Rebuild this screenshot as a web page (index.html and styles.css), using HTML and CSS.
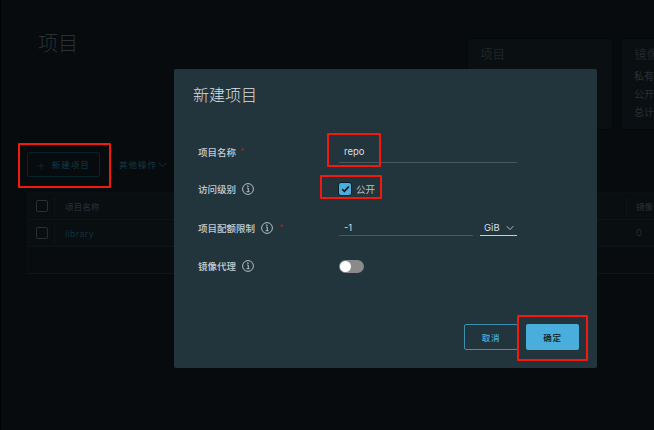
FILE: index.html
```html
<!DOCTYPE html>
<html lang="zh">
<head>
<meta charset="utf-8">
<title>项目</title>
<link rel="stylesheet" href="styles.css">
</head>
<body>
<svg class="defs" width="0" height="0" aria-hidden="true">
  <symbol id="info" viewBox="0 0 12 12">
    <circle cx="6" cy="6" r="5.4" fill="none" stroke="currentColor" stroke-width="0.9"/>
    <path d="M5 3h1.2v.9M5 5.1h1.3v3.5M4.6 8.7h2.9" fill="none" stroke="currentColor" stroke-width="0.9"/>
  </symbol>
  <symbol id="chev" viewBox="0 0 9 6">
    <path d="M.8 1l3.7 3.7L8.2 1" fill="none" stroke="currentColor" stroke-width="1"/>
  </symbol>
</svg>

<div class="page">
  <div class="top">
    <h1 class="page-title">项目</h1>
    <div class="cards">
      <section class="card card-a"><h2 class="card-title">项目</h2></section>
      <section class="card card-b">
        <h2 class="card-title">镜像仓库</h2>
        <p class="card-line">私有</p>
        <p class="card-line">公开</p>
        <p class="card-line">总计</p>
      </section>
    </div>
  </div>

  <div class="actions">
    <button class="new-btn"><span class="plus">+</span>新建项目</button>
    <button class="more-btn">其他操作<svg class="more-chev"><use href="#chev"/></svg></button>
  </div>

  <div class="table">
    <div class="tr th">
      <span class="cb"></span><span class="cell-name">项目名称</span><span class="cell-num">镜像仓库数</span>
    </div>
    <div class="tr">
      <span class="cb"></span><span class="cell-name link">library</span><span class="cell-num zero">0</span>
    </div>
    <div class="tr tfoot"></div>
  </div>
</div>

<div class="modal">
  <h3 class="modal-title">新建项目</h3>
  <form class="form">
    <div class="row">
      <div class="label">项目名称<span class="req">*</span></div>
      <div class="control underline"><span class="value">repo</span></div>
    </div>
    <div class="row">
      <div class="label">访问级别<svg class="info"><use href="#info"/></svg></div>
      <div class="control check-wrap">
        <span class="check"><svg width="9" height="8" viewBox="0 0 9 8"><path d="M1.2 4.2l2.2 2.2L7.8 1.6" fill="none" stroke="#08141c" stroke-width="1.6"/></svg></span>
        <span class="check-label">公开</span>
      </div>
    </div>
    <div class="row row-quota">
      <div class="label">项目配额限制<svg class="info"><use href="#info"/></svg><span class="req req-far">*</span></div>
      <div class="control quota">
        <div class="underline quota-input"><span class="value">-1</span></div>
        <div class="underline unit">GiB<svg class="unit-chev"><use href="#chev"/></svg></div>
      </div>
    </div>
    <div class="row row-proxy">
      <div class="label">镜像代理<svg class="info"><use href="#info"/></svg></div>
      <div class="control"><span class="toggle"><span class="knob"></span></span></div>
    </div>
  </form>
  <div class="footer">
    <button class="btn btn-outline" type="button">取消</button>
    <button class="btn btn-primary" type="button">确定</button>
  </div>
</div>

<div class="mark mark-new"></div>
<div class="mark mark-name"></div>
<div class="mark mark-check"></div>
<div class="mark mark-ok"></div>
</body>
</html>
```
FILE: styles.css
```css
* { box-sizing: border-box; }
html, body { margin: 0; padding: 0; }
body {
  width: 654px;
  height: 430px;
  overflow: hidden;
  position: relative;
  background: #070b0e;
  border-left: 1px solid #000;
  font-family: "Inter", "Noto Sans CJK SC", sans-serif;
  color: #c8d0d4;
}
.defs { position: absolute; }
.page { padding: 0 0 0 26px; width: 653px; }
.top { display: flex; height: 143px; }
.page-title {
  margin: 30px 0 0 11px;
  font: 300 20px/26px "Noto Sans CJK SC", sans-serif;
  color: #2b3033;
  width: 429px;
  flex: none;
}
.cards { display: flex; gap: 8px; padding-top: 38px; flex: none; }
.card {
  height: 92px;
  background: #0a0f12;
  border: 1px solid #05080a;
  border-radius: 2px;
  padding: 6px 12px;
  overflow: hidden;
  flex: none;
}
.card-a { width: 146px; }
.card-b { width: 120px; }
.card-title {
  margin: 0 0 4px;
  font: 300 12.5px/18px "Noto Sans CJK SC", sans-serif;
  color: #2b3033;
}
.card-line {
  margin: 0;
  font: 400 10px/18px "Noto Sans CJK SC", sans-serif;
  color: #2b3033;
}
.actions { display: flex; align-items: flex-start; height: 49px; padding-top: 9px; }
.new-btn {
  width: 73px;
  height: 25px;
  background: transparent;
  border: 1px solid #0c2029;
  border-radius: 2px;
  color: #12303d;
  font: 500 8.5px/1 "Noto Sans CJK SC", sans-serif;
  letter-spacing: 1px;
  padding: 0;
  display: flex;
  align-items: center;
  justify-content: center;
}
.plus { font: 200 15px/1 "Inter", sans-serif; margin-right: 5px; margin-left: -1px; }
.more-btn {
  margin-left: 19px;
  height: 25px;
  background: none;
  border: 0;
  padding: 0;
  color: #12303d;
  font: 500 8.5px/1 "Noto Sans CJK SC", sans-serif;
  letter-spacing: 1px;
  display: flex;
  align-items: center;
}
.more-chev { width: 9px; height: 6px; margin-left: 1px; }
.table { border-top: 1px solid #0b1013; }
.tr {
  display: flex;
  align-items: center;
  height: 27px;
  border-bottom: 1px solid #0e1417;
  border-left: 1px solid #0b1013;
  background: #090e11;
}
.tfoot { background: #080c0f; }
.cb {
  width: 12px;
  height: 12px;
  margin-left: 8px;
  border: 1px solid #2a2f31;
  border-radius: 2px;
  flex: none;
}
.cell-name {
  margin-left: 6px;
  padding-left: 10px;
  width: 572px;
  height: 19px;
  display: flex;
  align-items: center;
  flex: none;
  border-left: 1px solid #0e1417;
  font: 500 8.5px/1 "Noto Sans CJK SC", sans-serif;
  color: #272c2f;
}
.th .cell-name { letter-spacing: .2px; }
.link { color: #12303d; font: 400 9px/1 "Inter", sans-serif; letter-spacing: .3px; }
.cell-num {
  padding-left: 9px;
  height: 19px;
  display: flex;
  align-items: center;
  border-left: 1px solid #0e1417;
  font: 500 8.5px/1 "Noto Sans CJK SC", sans-serif;
  color: #272c2f;
  white-space: nowrap;
}
.zero { font: 400 9.5px/1 "Inter", sans-serif; border-left-color: transparent; }

.modal {
  position: absolute;
  left: 173px;
  top: 69px;
  width: 423px;
  height: 299px;
  background: #22343c;
  border-radius: 2px;
  display: flex;
  flex-direction: column;
  padding: 14px 18px 18px 19px;
}
.modal-title {
  margin: 0;
  font: 300 16px/22px "Noto Sans CJK SC", sans-serif;
  color: #d9dfe2;
}
.form { margin: 34px 0 0 5px; display: flex; flex-direction: column; flex: 1; }
.row { display: flex; align-items: center; height: 38px; }
.row:first-child { height: 36px; margin-top: -5px; }
.row-quota { height: 40px; }
.row-proxy { height: 36px; }
.label {
  width: 141px;
  display: flex;
  align-items: center;
  font: 500 9.5px/12px "Noto Sans CJK SC", sans-serif;
  color: #c6ced2;
  flex: none;
}
.req { color: #8c2e22; font-size: 9px; margin-left: 4px; line-height: 12px; }
.req-far { margin-left: 6px; }
.info { width: 12px; height: 12px; margin-left: 6px; color: #c6ced2; flex: none; }
.control { display: flex; align-items: center; width: 178px; flex: none; }
.underline { border-bottom: 1px solid #49585f; height: 21px; padding: 0 0 0 5px; display: flex; align-items: center; }
.value { font: 400 9.5px/12px "Inter", sans-serif; color: #d9dfe2; }
.check-wrap { gap: 4px; }
.check {
  width: 14px;
  height: 14px;
  background: #49aedb;
  border: 1.5px solid #0b1c27;
  border-radius: 3px;
  display: flex;
  align-items: center;
  justify-content: center;
  margin-left: -1px;
}
.check-label { font: 400 9.5px/12px "Noto Sans CJK SC", sans-serif; color: #b9c2c6; }
.quota { justify-content: space-between; }
.quota .underline { height: 15px; }
.quota-input { width: 134px; }
.quota .unit {
  width: 37px;
  padding: 0 0 0 4px;
  font: 400 9.5px/12px "Inter", sans-serif;
  color: #d9dfe2;
  border-bottom-color: #c6ced2;
}
.unit-chev { width: 8px; height: 6px; margin-left: 6px; color: #c6ced2; }
.toggle {
  width: 25px;
  height: 13px;
  border-radius: 7px;
  background: #8a8a8a;
  display: block;
  padding: 1px;
}
.knob { display: block; width: 11px; height: 11px; border-radius: 50%; background: #fff; }
.footer { display: flex; justify-content: flex-end; gap: 8px; height: 26px; }
.btn {
  height: 26px;
  border-radius: 2px;
  font: 500 8.5px/1 "Noto Sans CJK SC", sans-serif;
  letter-spacing: .8px;
  padding: 0;
}
.btn-outline { width: 54px; background: transparent; border: 1px solid #3e8fb2; color: #49aedb; }
.btn-primary { width: 53px; background: #49aedb; border: 0; color: #0a1a24; }

.mark { position: absolute; border: 2px solid #f3190f; border-radius: 1px; }
.mark-new { left: 17px; top: 143px; width: 93px; height: 45px; }
.mark-name { left: 326px; top: 133px; width: 54px; height: 34px; }
.mark-check { left: 319px; top: 175px; width: 62px; height: 24px; }
.mark-ok { left: 516px; top: 315px; width: 71px; height: 46px; }
```
